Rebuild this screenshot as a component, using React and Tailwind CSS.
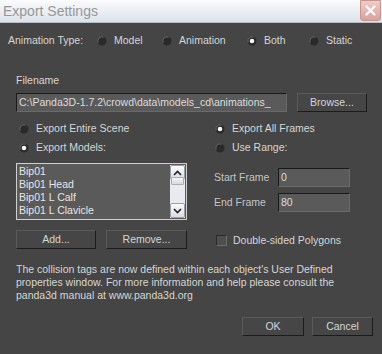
import React from 'react';

const font = { fontFamily: '"Liberation Sans", Arial, sans-serif' };

const Radio = ({ checked }) => (
  <svg width="10" height="10" viewBox="0 0 10 10" className="shrink-0">
    <circle cx="5" cy="5" r="4.5" fill="#2a2a2a" />
    <path d="M1.2 6.5 A4 4 0 0 1 6.5 1.2" stroke="#6a6a6a" strokeWidth="1" fill="none" />
    {checked && <circle cx="5" cy="5" r="2.3" fill="#f4f4f4" />}
  </svg>
);

const RadioItem = ({ checked, label, className = '' }) => (
  <div className={`flex items-center gap-[7px] ${className}`}>
    <Radio checked={checked} />
    <span>{label}</span>
  </div>
);

const Button = ({ children, className = '' }) => (
  <div
    className={`flex items-center justify-center h-[19px] bg-[#464646] border border-t-[#5a5a5a] border-l-[#5a5a5a] border-b-[#1c1c1c] border-r-[#1c1c1c] text-[#d6d6d6] ${className}`}
  >
    {children}
  </div>
);

const Field = ({ value, className = '' }) => (
  <div
    className={`flex items-center h-[19px] px-[2px] bg-[#5a5a5a] border border-t-[#1a1a1a] border-l-[#1a1a1a] border-b-[#6a6a6a] border-r-[#6a6a6a] text-[#dcdcdc] overflow-hidden whitespace-nowrap ${className}`}
  >
    {value}
  </div>
);

const models = ['Bip01', 'Bip01 Head', 'Bip01 L Calf', 'Bip01 L Clavicle'];

export default function App() {
  return (
    <div className="w-[382px] h-[354px] bg-[#454545] text-[#d6d6d6] text-[10.5px] leading-[13px] overflow-hidden" style={font}>
      {/* title bar */}
      <div className="flex items-center justify-between h-[23px] bg-gradient-to-b from-[#fafbfc] to-[#dde3ea] border-b border-[#b8bec6]">
        <span className="pl-[3px] text-[14px] text-[#979797]">Export Settings</span>
        <div className="w-[21px] h-[21px] mr-[1px] mb-[2px] rounded-b-[3px] bg-gradient-to-b from-[#f0cbc8] to-[#d7a29e] border border-[#c49490] flex items-center justify-center">
          <svg width="11" height="11" viewBox="0 0 11 11">
            <path d="M1.5 1.5 L9.5 9.5 M9.5 1.5 L1.5 9.5" stroke="#fff" strokeWidth="2.2" strokeLinecap="round" />
          </svg>
        </div>
      </div>

      <div className="flex flex-col">
        {/* animation type */}
        <div className="flex items-center pl-[8px] mt-[11px] h-[13px]">
          <span className="w-[89px]">Animation Type:</span>
          <RadioItem label="Model" className="w-[65px]" />
          <RadioItem label="Animation" className="w-[85px]" />
          <RadioItem checked label="Both" className="w-[62px]" />
          <RadioItem label="Static" />
        </div>

        {/* filename */}
        <span className="pl-[16px] mt-[27px]">Filename</span>
        <div className="flex items-center pl-[16px] mt-[6px] gap-[10px]">
          <Field value="C:\Panda3D-1.7.2\crowd\data\models_cd\animations_" className="w-[271px]" />
          <Button className="w-[70px]">Browse...</Button>
        </div>

        {/* two columns */}
        <div className="flex pl-[16px] mt-[10px]">
          <div className="w-[171px] flex flex-col">
            <RadioItem label="Export Entire Scene" className="ml-[3px] h-[13px]" />
            <RadioItem checked label="Export Models:" className="ml-[3px] h-[13px] mt-[6px]" />
            <div className="mt-[9px] h-[57px] border border-[#cfcfcf] bg-[#5a5a5a] flex">
              <div className="flex-1 flex flex-col pl-[2px] pt-[1px] text-[#e6e6e6]">
                {models.map((m) => (
                  <span key={m} className="h-[13px] leading-[13px]">{m}</span>
                ))}
              </div>
              <div className="w-[15px] my-[1px] mr-[1px] bg-[#e9eaf0] flex flex-col justify-between">
                <div className="h-[15px] border border-[#9aa0aa] bg-gradient-to-b from-[#fbfbfd] to-[#dcdde4] flex items-center justify-center rounded-[2px]">
                  <svg width="9" height="6" viewBox="0 0 9 6"><path d="M1 5 L4.5 1.5 L8 5" stroke="#222" strokeWidth="1.6" fill="none" /></svg>
                </div>
                <div className="h-[8px] mx-[1px] -mt-[3px] mb-auto border border-[#a8adb6] bg-gradient-to-b from-[#f6f6f8] to-[#d6d8de] rounded-[1px]" />
                <div className="h-[15px] border border-[#9aa0aa] bg-gradient-to-b from-[#fbfbfd] to-[#dcdde4] flex items-center justify-center rounded-[2px]">
                  <svg width="9" height="6" viewBox="0 0 9 6"><path d="M1 1 L4.5 4.5 L8 1" stroke="#222" strokeWidth="1.6" fill="none" /></svg>
                </div>
              </div>
            </div>
            <div className="flex gap-[10px] mt-[10px]">
              <Button className="w-[80px]">Add...</Button>
              <Button className="w-[81px]">Remove...</Button>
            </div>
          </div>

          <div className="ml-[27px] flex flex-col flex-1">
            <RadioItem checked label="Export All Frames" className="ml-[1px] h-[13px]" />
            <RadioItem label="Use Range:" className="ml-[1px] h-[13px] mt-[6px]" />
            <div className="flex items-center mt-[14px]">
              <span className="w-[64px] text-[#c4c4c4]">Start Frame</span>
              <Field value="0" className="w-[72px] h-[18px]" />
            </div>
            <div className="flex items-center mt-[6px]">
              <span className="w-[64px] text-[#c4c4c4]">End Frame</span>
              <Field value="80" className="w-[72px] h-[18px]" />
            </div>
            <div className="flex items-center gap-[6px] mt-[22px] ml-[2px]">
              <div className="w-[11px] h-[11px] bg-[#4e4e4e] border border-t-[#2a2a2a] border-l-[#2a2a2a] border-b-[#6c6c6c] border-r-[#6c6c6c]" />
              <span>Double-sided Polygons</span>
            </div>
          </div>
        </div>

        {/* info */}
        <p className="pl-[16px] pr-[20px] mt-[14px]">
          The collision tags are now defined within each object's User Defined properties window. For more information and help please consult the panda3d manual at www.panda3d.org
        </p>

        {/* footer */}
        <div className="flex justify-end gap-[8px] pr-[9px] mt-[15px]">
          <Button className="w-[62px]">OK</Button>
          <Button className="w-[61px]">Cancel</Button>
        </div>
      </div>
    </div>
  );
}
